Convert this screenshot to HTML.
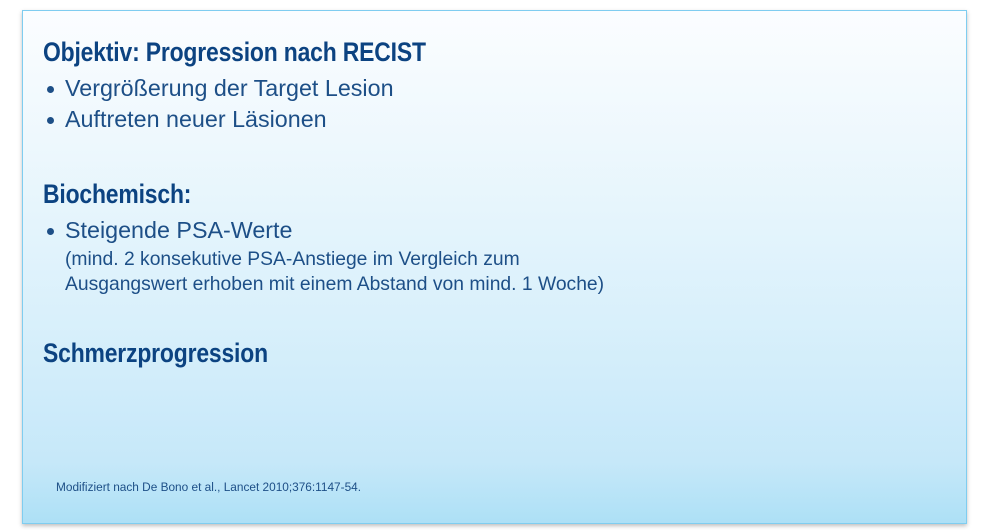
<!DOCTYPE html>
<html><head><meta charset="utf-8"><style>
html,body{margin:0;padding:0;width:984px;height:530px;background:#fff;overflow:hidden;font-family:"Liberation Sans",sans-serif}
.box{position:absolute;left:22px;top:10px;width:943px;height:512px;border:1px solid #7fcdf0;
background:linear-gradient(#fbfdff 0%,#eef8fd 25%,#d9f0fb 60%,#c6e8f9 88%,#ade0f6 100%);
box-shadow:0 2px 4px rgba(0,0,0,.25)}
.t{position:absolute;white-space:nowrap;color:#1d4f87}
h{position:absolute;white-space:nowrap;color:#0c4381;font-weight:bold;font-size:26.5px;transform:scaleX(.865);transform-origin:0 0;letter-spacing:-.2px}
.b{font-size:23.3px}
.s{font-size:19.4px;transform:scaleX(.995);transform-origin:0 0}
.dot{position:absolute;width:7px;height:7px;border-radius:50%;background:#1d4f87}
</style></head><body>
<div class="box"></div>
<h style="left:43px;top:37px">Objektiv: Progression nach RECIST</h>
<div class="dot" style="left:47px;top:86px"></div><div class="t b" style="left:65px;top:75px">Vergrößerung der Target Lesion</div>
<div class="dot" style="left:47px;top:117px"></div><div class="t b" style="left:65px;top:106px">Auftreten neuer Läsionen</div>
<h style="left:43px;top:179px">Biochemisch:</h>
<div class="dot" style="left:47px;top:228px"></div><div class="t b" style="left:65px;top:217px">Steigende PSA-Werte</div>
<div class="t s" style="left:65px;top:248px">(mind. 2 konsekutive PSA-Anstiege im Vergleich zum</div>
<div class="t s" style="left:65px;top:273px">Ausgangswert erhoben mit einem Abstand von mind. 1 Woche)</div>
<h style="left:43px;top:338px">Schmerzprogression</h>
<div class="t" style="left:56px;top:480px;font-size:12.4px;transform:scaleX(.955);transform-origin:0 0">Modifiziert nach De Bono et al., Lancet 2010;376:1147-54.</div>
</body></html>
